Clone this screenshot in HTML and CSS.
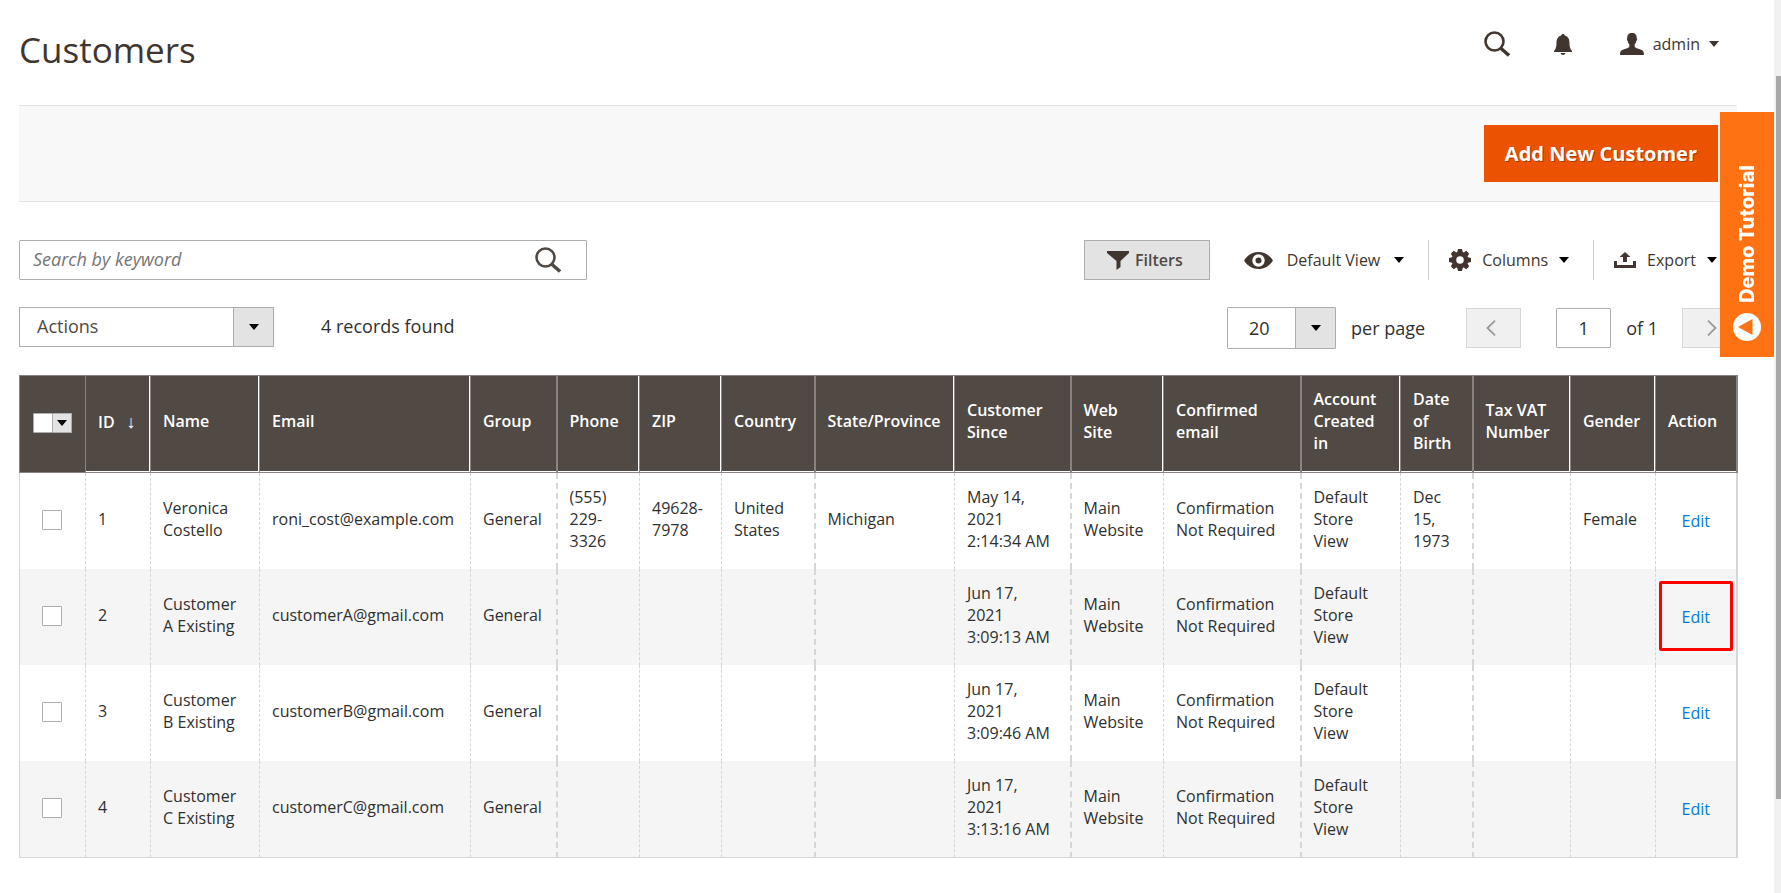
FILE: index.html
```html
<!DOCTYPE html>
<html lang="en">
<head>
<meta charset="utf-8">
<title>Customers</title>
<link rel="stylesheet" href="styles.css">
</head>
<body>
<svg class="sprite" aria-hidden="true">
  <symbol id="i-search" viewBox="0 0 26 26"><circle cx="10.5" cy="10.5" r="9" fill="none" stroke="currentColor" stroke-width="2.6"/><path d="M16.5 17 25 24.5" fill="none" stroke="currentColor" stroke-width="3.4"/></symbol>
  <symbol id="i-caret" viewBox="0 0 10 6"><path d="M0 0h10L5 6z" fill="currentColor"/></symbol>
  <symbol id="i-left" viewBox="0 0 10 16"><path d="M9 .7 1.5 8 9 15.300" fill="none" stroke="currentColor" stroke-width="1.8"/></symbol>
  <symbol id="i-right" viewBox="0 0 10 16"><path d="M1 .7 8.500 8 1 15.300" fill="none" stroke="currentColor" stroke-width="1.8"/></symbol>
</svg>
<main class="page">
  <header class="header">
    <h1 class="title">Customers</h1>
    <div class="header-tools">
      <button class="plain" aria-label="Search"><svg class="i26"><use href="#i-search"/></svg></button>
      <button class="plain bell" aria-label="Notifications"><svg class="i-bell" viewBox="0 0 18 21"><path d="M9 0c1.200 0 1.700.7 1.800 1.500C14.300 2.500 15.500 5.500 15.500 9c0 4 .8 6 2.500 8v1H0v-1c1.700-2 2.500-4 2.500-8 0-3.500 1.200-6.500 4.700-7.500C7.300.7 7.800 0 9 0zM6.500 19h5c-.3 1.300-1.300 2-2.500 2s-2.200-.7-2.500-2z" fill="currentColor"/></svg></button>
      <button class="plain user"><svg class="i-user" viewBox="0 0 24 22"><path d="M12 0c3.300 0 5 2 4.700 5.200.7.300.5 2.200-.4 2.800-.3 1.600-.8 2.500-1.600 3.300v2.500c.6 1.300 3 1.700 5.300 2.500 3 1 4 2 4 5.700H0c0-3.700 1-4.700 4-5.700 2.300-.8 4.700-1.200 5.300-2.500v-2.500C8.500 10.500 8 9.600 7.700 8c-.9-.6-1.100-2.500-.4-2.800C7 2 8.700 0 12 0z" fill="currentColor"/></svg><span>admin</span><svg class="caret"><use href="#i-caret"/></svg></button>
    </div>
  </header>
  <div class="actions-bar"><button class="primary">Add New Customer</button></div>

  <div class="row">
    <form class="search">
      <input class="search-input" type="text" placeholder="Search by keyword" aria-label="Search by keyword">
      <button class="plain" type="button" aria-label="Search"><svg class="i26"><use href="#i-search"/></svg></button>
    </form>
    <div class="tools">
      <button class="filters"><svg class="i-funnel" viewBox="0 0 22 19"><path d="M0 0h22v2l-8.500 8v6l-4 3v-9L0 2z" fill="currentColor"/></svg>Filters</button>
      <button class="plain tool view"><svg class="i-eye" viewBox="0 0 29 17"><path d="M0 8.500C3.500 3 8.500 0 14.500 0S25.500 3 29 8.500C25.500 14 20.500 17 14.500 17S3.500 14 0 8.500z" fill="currentColor"/><circle cx="14.500" cy="8.500" r="6.200" fill="#fff"/><circle cx="14.500" cy="8.500" r="3" fill="currentColor"/></svg><span>Default View</span><svg class="caret dark"><use href="#i-caret"/></svg></button>
      <button class="plain tool"><svg class="i-gear" viewBox="-11 -11 22 22"><g fill="currentColor"><path id="tooth" d="M-3-7-2-11H2L3-7z"/><use href="#tooth" transform="rotate(45)"/><use href="#tooth" transform="rotate(90)"/><use href="#tooth" transform="rotate(135)"/><use href="#tooth" transform="rotate(180)"/><use href="#tooth" transform="rotate(225)"/><use href="#tooth" transform="rotate(270)"/><use href="#tooth" transform="rotate(315)"/></g><circle r="6" fill="none" stroke="currentColor" stroke-width="4.500"/></svg><span>Columns</span><svg class="caret dark"><use href="#i-caret"/></svg></button>
      <button class="plain tool export"><svg class="i-export" viewBox="0 0 22 16"><path d="M0 9h3v4h16V9h3v7H0zM11 0l5.500 5H13v5H9V5H5.500z" fill="currentColor"/></svg><span>Export</span><svg class="caret dark"><use href="#i-caret"/></svg></button>
    </div>
  </div>

  <div class="row row-second">
    <div class="select mass"><select aria-label="Actions"><option>Actions</option></select><span class="select-arrow"><svg class="caret"><use href="#i-caret"/></svg></span></div>
    <span class="records">4 records found</span>
    <div class="pager">
      <div class="select size"><select id="size"><option>20</option></select><span class="select-arrow"><svg class="caret"><use href="#i-caret"/></svg></span></div>
      <label class="per-page" for="size">per page</label>
      <button class="step" aria-label="Previous page" disabled><svg class="chevron"><use href="#i-left"/></svg></button>
      <input class="page-no" id="page" type="text" value="1">
      <label class="of" for="page">of 1</label>
      <button class="step" aria-label="Next page" disabled><svg class="chevron"><use href="#i-right"/></svg></button>
    </div>
  </div>

  <table class="grid">
    <colgroup><col class="c-check"><col class="c-id"><col class="c-name"><col class="c-email"><col class="c-group"><col class="c-phone"><col class="c-zip"><col class="c-country"><col class="c-state"><col class="c-since"><col class="c-site"><col class="c-conf"><col class="c-acct"><col class="c-dob"><col class="c-tax"><col class="c-gender"><col class="c-action"></colgroup>
    <thead><tr>
      <th class="check soft"><span class="multi"><input type="checkbox" aria-label="Select all"><button class="multi-arrow" aria-label="Selection options"><svg class="caret"><use href="#i-caret"/></svg></button></span></th>
      <th>ID<span class="sort">↓</span></th><th>Name</th><th>Email</th><th class="wide">Group</th><th>Phone</th><th>ZIP</th><th class="wide">Country</th><th>State/Province</th><th class="wide">Customer Since</th><th>Web<br>Site</th><th class="wide">Confirmed email</th><th>Account Created in</th><th class="wide">Date of Birth</th><th>Tax VAT Number</th><th>Gender</th><th class="wide">Action</th>
    </tr></thead>
    <tbody>
      <tr><td class="check"><input type="checkbox" aria-label="Select 1"></td><td>1</td><td>Veronica Costello</td><td>roni_cost@example.com</td><td class="wide">General</td><td>(555) 229-3326</td><td>49628-7978</td><td class="wide">United States</td><td>Michigan</td><td class="wide">May 14, 2021 2:14:34 AM</td><td>Main Website</td><td class="wide">Confirmation Not Required</td><td>Default Store View</td><td class="wide">Dec 15, 1973</td><td></td><td>Female</td><td class="act"><a href="#">Edit</a></td></tr>
      <tr><td class="check"><input type="checkbox" aria-label="Select 2"></td><td>2</td><td>Customer A Existing</td><td>customerA@gmail.com</td><td class="wide">General</td><td></td><td></td><td class="wide"></td><td></td><td class="wide">Jun 17, 2021 3:09:13 AM</td><td>Main Website</td><td class="wide">Confirmation Not Required</td><td>Default Store View</td><td class="wide"></td><td></td><td></td><td class="act marked"><a href="#">Edit</a></td></tr>
      <tr><td class="check"><input type="checkbox" aria-label="Select 3"></td><td>3</td><td>Customer B Existing</td><td>customerB@gmail.com</td><td class="wide">General</td><td></td><td></td><td class="wide"></td><td></td><td class="wide">Jun 17, 2021 3:09:46 AM</td><td>Main Website</td><td class="wide">Confirmation Not Required</td><td>Default Store View</td><td class="wide"></td><td></td><td></td><td class="act"><a href="#">Edit</a></td></tr>
      <tr><td class="check"><input type="checkbox" aria-label="Select 4"></td><td>4</td><td>Customer C Existing</td><td>customerC@gmail.com</td><td class="wide">General</td><td></td><td></td><td class="wide"></td><td></td><td class="wide">Jun 17, 2021 3:13:16 AM</td><td>Main Website</td><td class="wide">Confirmation Not Required</td><td>Default Store View</td><td class="wide"></td><td></td><td></td><td class="act"><a href="#">Edit</a></td></tr>
    </tbody>
  </table>
</main>
<button class="demo"><svg class="i-demo" viewBox="0 0 28 28"><circle cx="14" cy="14" r="14" fill="#fff"/><path d="M19.500 6v16L5 14z" fill="#ff7214"/></svg><span>Demo Tutorial</span></button>
<div class="scrollbar"><div class="thumb"></div></div>
</body>
</html>
```
FILE: styles.css
```css
* { box-sizing: border-box; }
body { margin: 0; background: #fff; color: #303030; font: 16px/22px "Open Sans", "Noto Sans", sans-serif; }
button, input, select { font: inherit; color: inherit; margin: 0; border-radius: 0; }
svg { display: block; flex: none; }
.sprite { position: absolute; width: 0; height: 0; }
.page { padding: 0 44px 0 19px; }
.plain { display: flex; align-items: center; padding: 0; border: 0; background: none; color: #41362f; }
.caret { width: 10px; height: 6px; }
.dark { color: #000; }
.i26 { width: 26px; height: 26px; }
.i-bell { width: 18px; height: 21px; }
.i-user { width: 24px; height: 22px; }
.i-funnel { width: 22px; height: 19px; color: #41362f; }
.i-eye { width: 29px; height: 17px; }
.i-gear { width: 22px; height: 22px; }
.i-export { width: 22px; height: 16px; }

.header { display: flex; justify-content: space-between; align-items: flex-start; height: 105px; }
.title { margin: 26px 0 0; font-size: 35px; line-height: 48px; font-weight: 400; color: #41362f; }
.header-tools { display: flex; align-items: center; gap: 44px; margin: 31px 18px 0 0; }
.user { gap: 9px; margin-left: 4px; }

.actions-bar { display: flex; justify-content: flex-end; padding: 19px; background: #f8f8f8; border: solid #e3e3e3; border-width: 1px 0; }
.primary { padding: 15px 21px 14px; border: 0; background: #eb5202; color: #fff; font-size: 20px; line-height: 28px; font-weight: 700; text-shadow: 1px 1px 0 rgba(0, 0, 0, .3); }

.row { display: flex; align-items: center; margin-top: 38px; }
.row-second { margin-top: 27px; align-items: flex-start; font-size: 18px; height: 42px; }
.search { display: flex; align-items: center; width: 568px; height: 40px; padding-right: 25px; border: 1px solid #adadad; border-radius: 1px; }
.search .plain { color: #514943; }
.search-input { flex: 1; height: 38px; padding: 0 13px 2px; border: 0; background: none; outline: 0; font-size: 18px; }
.search-input::placeholder { color: #757575; font-style: italic; opacity: 1; }
.tools { display: flex; align-items: center; margin: 0 20px 0 auto; }
.filters { display: flex; align-items: center; gap: 6px; height: 40px; padding: 0 26px 0 22px; border: 1px solid #adadad; background: #e3e3e3; color: #514943; font-weight: 600; }
.tool { height: 40px; padding: 0 24px 0 20px; border-right: 1px solid #ccc; gap: 11px; }
.tool span { color: #41362f; }
.view { padding-left: 34px; gap: 14px; }
.export { padding-right: 0; border: 0; }

.select { position: relative; display: flex; height: 40px; border: 1px solid #adadad; background: #fff; }
.select select { width: 100%; padding: 0 50px 0 17px; border: 0; background: none; appearance: none; outline: 0; }
.select-arrow { position: absolute; inset: 0 0 0 auto; width: 40px; display: flex; align-items: center; justify-content: center; background: #e3e3e3; border-left: 1px solid #adadad; color: #000; pointer-events: none; }
.mass { width: 255px; color: #514943; }
.mass select { padding-bottom: 2px; }
.size { width: 109px; height: 42px; border-radius: 1px; }
.size select { padding-left: 21px; }
.records { margin: 8px 0 0 47px; }
.pager { display: flex; align-items: center; margin-left: auto; }
.per-page { margin: 0 41px 0 15px; }
.step { display: flex; align-items: center; justify-content: center; width: 55px; height: 40px; padding: 0 6px 0 0; border: 1px solid #d6d6d6; background: #f0f0f0; color: #999; }
.chevron { width: 10px; height: 16px; }
.page-no { width: 55px; height: 40px; margin-left: 35px; border: 1px solid #adadad; border-radius: 1px; text-align: center; }
.of { margin: 0 24px 0 15px; }
.of + .step { padding: 0 0 0 4px; }

.grid { width: 100%; margin-top: 26px; table-layout: fixed; border-collapse: collapse; }
.c-check { width: 66px; } .c-id { width: 65px; } .c-name { width: 109px; } .c-email { width: 211px; }
.c-group { width: 86px; } .c-phone { width: 83px; } .c-zip { width: 82px; } .c-country { width: 93px; }
.c-state { width: 140px; } .c-since { width: 116px; } .c-site { width: 93px; } .c-conf { width: 137px; }
.c-acct { width: 100px; } .c-dob { width: 72px; } .c-tax { width: 98px; } .c-gender { width: 85px; } .c-action { width: 81px; }
.grid th { height: 97px; padding: 0 13px 6px 12px; text-align: left; font-weight: 600; color: #fff; background: #514943; border: 1px solid #8a837f; box-shadow: inset -1px -1px 0 #fff; }
.grid th.soft { box-shadow: none; }
.grid th.wide { border-right-width: 2px; box-shadow: inset 0 -1px 0 #fff; }
.grid td { height: 96px; padding: 0 13px 4px 12px; border: 1px dashed #d6d6d6; border-width: 0 1px; }
.grid td.wide { border-right-width: 2px; }
.grid td.check { border-left: 1px solid #d6d6d6; }
.grid td.act { padding: 0; border-right: 2px solid #d6d6d6; text-align: center; }
.grid tbody tr:last-child td { height: 97px; border-bottom: 1px solid #d6d6d6; }
.grid tbody tr:nth-child(even) { background: #f5f5f5; }
.grid .check { padding: 0 2px 2px 0; text-align: center; }
.grid th.check { padding: 0 0 4px; }
.grid a { color: #007bdb; text-decoration: none; }
.sort { margin-left: 12px; font-weight: 400; font-size: 18px; }
.check input { display: block; width: 20px; height: 20px; margin: auto; appearance: none; background: #fff; border: 1px solid #adadad; border-radius: 1px; }
.multi { display: inline-flex; vertical-align: middle; }
.multi-arrow { display: flex; align-items: center; justify-content: center; width: 19px; height: 20px; padding: 0; border: 1px solid #adadad; border-left: 0; background: #e3e3e3; color: #000; }
.marked { position: relative; }
.marked::after { content: ""; position: absolute; inset: 12px 3px 14px 3px; border: 3px solid #f00; border-radius: 2px; pointer-events: none; }

.demo { position: fixed; top: 112px; right: 7px; width: 54px; height: 245px; display: flex; align-items: center; gap: 10px; padding: 16px 0 0; border: 0; writing-mode: vertical-rl; transform: rotate(180deg); background: #ff7214; color: #fff; font: 800 20px/24px Inter, sans-serif; }
.i-demo { width: 28px; height: 28px; transform: rotate(180deg); }
.scrollbar { position: fixed; inset: 0 0 0 auto; width: 7px; padding: 76px 0 94px 2px; background: #f1f1f1; }
.thumb { height: 100%; background: #a8a8a8; }
```
